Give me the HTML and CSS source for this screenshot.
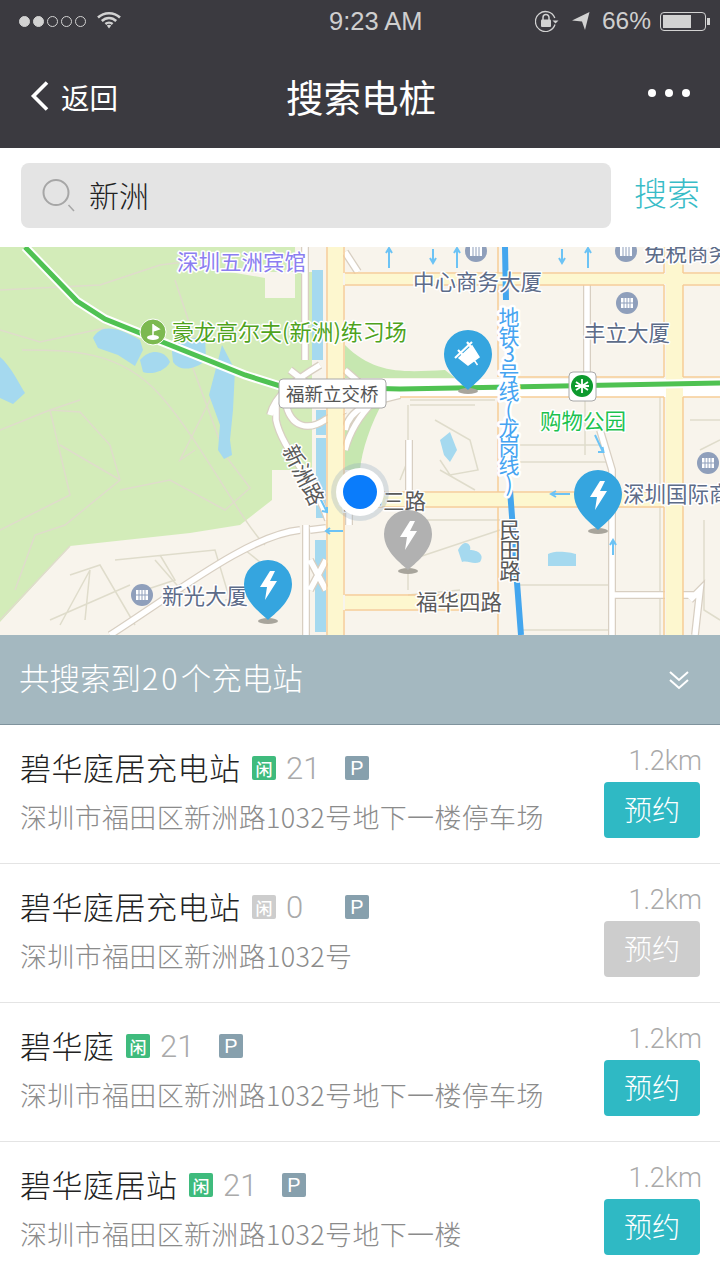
FILE: index.html
```html
<!DOCTYPE html>
<html lang="zh-CN">
<head>
<meta charset="utf-8">
<title>搜索电桩</title>
<link rel="stylesheet" href="styles.css">
</head>
<body>
<div class="screen">
  <header class="top">
    <div class="status">
      <div class="status-left">
        <span class="sig on"></span><span class="sig on"></span><span class="sig"></span><span class="sig"></span><span class="sig"></span>
        <svg class="wifi" width="24" height="18" viewBox="0 0 24 18"><path d="M1 6.500C7 .7 17 .7 23 6.500M4.800 10C9 6 15 6 19.200 10M8.400 13C10.400 11.300 13.600 11.300 15.600 13" fill="none" stroke="#d2d2d2" stroke-width="2.500"/><path d="M9.800 14.500L12 17.500 14.200 14.500C13 13.600 11 13.600 9.800 14.500Z" fill="#d2d2d2"/></svg>
      </div>
      <div class="time">9:23 AM</div>
      <div class="status-right">
        <svg class="lock" width="24" height="22" viewBox="0 0 24 22"><path d="M19.800 8A10 10 0 1 0 20 14.500" fill="none" stroke="#d2d2d2" stroke-width="1.300"/><path d="M17.500 10.500h6l-3 3z" fill="#d2d2d2"/><rect x="6" y="9.500" width="10" height="7.500" rx="1" fill="#d2d2d2"/><path d="M8 10V7.500a3 3 0 0 1 6 0V10" fill="none" stroke="#d2d2d2" stroke-width="1.500"/></svg>
        <svg class="arrow" width="18" height="20" viewBox="0 0 18 20"><path d="M0 9.500L17.500 1 13 19 10 10.500Z" fill="#d2d2d2"/></svg>
        <span class="pct">66%</span>
        <div class="battery"><div class="battery-fill"></div></div>
        <span class="battery-tip"></span>
      </div>
    </div>
    <nav class="nav">
      <div class="back">
        <svg width="20" height="32" viewBox="0 0 20 32"><path d="M17 2.500L3.500 16 17 29.500" fill="none" stroke="#fff" stroke-width="3.600"/></svg>
        <span>返回</span>
      </div>
      <h1 class="title">搜索电桩</h1>
      <div class="more"><i></i><i></i><i></i></div>
    </nav>
  </header>

  <div class="search">
    <div class="search-box">
      <svg width="36" height="36" viewBox="0 0 36 36"><circle cx="15" cy="14.500" r="12.500" fill="none" stroke="#a6a6a6" stroke-width="2"/><path d="M27.500 27L33 33" stroke="#a6a6a6" stroke-width="1.500"/></svg>
      <span class="query">新洲</span>
    </div>
    <span class="search-btn">搜索</span>
  </div>

  <div class="map">
    <svg width="720" height="388" viewBox="0 247 720 388">
      <defs>
        <g id="ramps">
          <path d="M305 247V360M270 415C275 395 295 380 320 365M290 370L322 395M276 402V420C282 450 315 480 328 520M285 400C290 430 310 430 325 420L345 410M300 530C250 535 180 590 110 635M310 530L326 528M306 525V635M310 560L326 590M326 560L310 590"/>
          <path d="M345 252L358 272M345 370L370 392H345M345 430C350 405 380 400 400 395M345 450C350 430 360 415 375 400M349 475V525"/>
          <path d="M587 285V378M600 430L612 470V635M612 595H665M683 595H700M690 600L700 590 695 635M409 440V490"/>
        </g>
      </defs>
      <rect x="0" y="247" width="720" height="388" fill="#f8f4ec"/>
      <path class="park" d="M0 247H312V470H272V500L240 525 190 533 70 546 0 622Z"/>
      <path class="hotel" d="M230 272L265 278V298H295V247H312V272Z"/>
      <path class="parkstrip" d="M345 345C375 375 405 372 445 370L455 378H345ZM345 425C360 410 375 400 385 398 370 425 362 450 360 470H345Z"/>
      <g class="minor">
        <path d="M0 290L100 285 160 265 240 255M0 330L40 342 105 328M22 350C70 350 120 350 160 395 200 440 240 520 265 545M50 410L0 430M80 400L50 410 70 495 0 530M50 410L80 412 110 445 120 480 65 525 35 535 15 590M120 480L60 445M120 490L170 480 225 510 250 488 225 455 190 360M175 280L195 340 190 360M60 625L90 570 85 620 M0 620L70 546M220 380L180 460 195 450 M160 555L175 580 145 590M70 575L100 565 135 625M50 620L130 585M155 560L190 600M115 560L215 550 230 600M245 550L270 570M225 600L280 590"/>
        <path d="M410 405H475M408 405V460L400 480M410 400L495 400M435 420L470 440 478 470 450 475 440 460M440 470L475 490M408 520H500M410 560L500 530M408 555V590M408 595L460 590M520 585H610M520 462H608L615 480M520 445H600M520 630H610M660 380V640M690 420H720M700 450L720 440M704 520V610L720 620M585 400V455"/>
      </g>
      <g class="lake">
        <path d="M93 338C100 325 115 325 140 340L143 350 135 366 118 355 98 348Z"/>
        <path d="M140 360C150 348 165 350 170 362 165 372 150 375 143 372Z"/>
        <path d="M172 352C175 340 190 340 205 335L206 360C195 370 180 372 173 362Z"/>
        <path d="M222 345L235 370 233 410 230 440 232 455 224 459 218 450 220 425 209 395Z"/>
        <path d="M0 357C10 365 20 385 25 393L13 404 0 398Z"/>
        <path d="M440 440L450 432 457 450 450 462 444 455Z"/>
        <path d="M458 550C465 537 472 545 470 550 478 550 485 555 480 562 473 565 468 560 462 562Z"/>
        <path d="M548 554C555 550 570 552 576 554V566H548Z"/>
      </g>
      <g class="canal">
        <rect x="312" y="270" width="11" height="90"/><rect x="316" y="410" width="10" height="25"/><rect x="316" y="438" width="10" height="80"/><rect x="315" y="540" width="11" height="92"/>
      </g>
      <use href="#ramps" class="road-case"/>
      <use href="#ramps" class="road-fill"/>
      <path class="metro-road" d="M345 388H720"/>
      <g class="yellow">
        <rect x="328" y="247" width="15" height="388"/>
        <rect x="345" y="274" width="375" height="10"/>
        <rect x="666" y="247" width="17" height="388"/>
        <rect x="345" y="493" width="320" height="13"/>
        <rect x="345" y="596" width="153" height="13"/>
      </g>
      <path class="road-edge" d="M327 247V635M344 247V273M344 285V492M344 507V595M344 610V635M345 273H664M683 273H720M345 285H664M683 285H720M664 285V377M683 285V377M664 397V492M683 397V635M664 507V635M345 492H664M345 507H664M345 595H498M345 610H498M498 247V273M498 285V377M498 397V492M498 507V595M498 610V635M500 377H664M683 377H720M400 397H664M683 397H720M664 247V273M683 247V273"/>
      <path class="line-case" d="M25 247L77 301 105 319 245 375 280 386 400 389 720 383"/>
      <path class="line-green" d="M25 247L77 301 105 319 245 375 280 386 400 389 720 383"/>
      <g class="oneway">
        <path d="M389 248V268M386 253l3-5 3 5M433 249V263M430 258l3 5 3-5M457 249V268M454 253l3-5 3 5M562 249V263M559 258l3 5 3-5M588 249V268M585 253l3-5 3 5"/>
        <path d="M595 435L603 452M598 452h5.500l-1-5M570 494H551M556 491l-5 3 5 3M613 540V555M610 545l3-5 3 5M320 498L327 512M322 511l5 1 0-5M343 531H326M330 528l-4 3 4 3"/>
      </g>
      <path class="metro-line" d="M505 247L506 300M510 490L521 635"/>

      <g class="poi">
        <circle cx="627" cy="303" r="11"/><rect x="621" y="298" width="12" height="10"/>
        <circle cx="708" cy="463" r="11"/><rect x="702" y="458" width="12" height="10"/>
        <circle cx="142" cy="595" r="11"/><rect x="136" y="590" width="12" height="10"/>
        <circle cx="626" cy="251" r="11"/><rect x="620" y="247" width="12" height="9"/>
        <circle cx="476" cy="251" r="11"/><rect x="470" y="247" width="12" height="9"/>
      </g>
      <path class="poi-lines" d="M624 298V308M627 298V308M630 298V308M621 303H633M705 458V468M708 458V468M711 458V468M702 463H714M139 590V600M142 590V600M145 590V600M136 595H148M623 247V256M626 247V256M629 247V256M473 247V256M476 247V256M479 247V256"/>
      <circle cx="153" cy="332" r="13" class="golf"/>
      <path d="M153 324V336M153 325L159 329 153 331" fill="#fff" stroke="#fff" stroke-width="1.500"/>
      <ellipse cx="153" cy="337.500" rx="6" ry="2.500" fill="#fff"/>

      <rect x="279" y="379" width="107" height="29" rx="4" class="tag"/>
      <text x="286" y="401" class="lbl tag-t">福新立交桥</text>
      <text x="177" y="270" class="lbl violet">深圳五洲宾馆</text>
      <text x="172" y="340" class="lbl green">豪龙高尔夫(新洲)练习场</text>
      <text x="413" y="290" class="lbl slate">中心商务大厦</text>
      <text x="644" y="261" class="lbl slate">免税商务</text>
      <text x="584" y="341" class="lbl slate">丰立大厦</text>
      <text x="623" y="502" class="lbl slate">深圳国际商</text>
      <text x="162" y="604" class="lbl slate">新光大厦</text>
      <text x="540" y="429" class="lbl bright">购物公园</text>
      <text x="416" y="610" class="lbl grey">福华四路</text>
      <text x="340" y="509" class="lbl grey">福中三路</text>
      <text x="0" y="0" class="lbl grey" transform="translate(282 450) rotate(63)">新洲路</text>
      <text x="509" y="307" class="lbl metro vert">地铁3号线(龙岗线)</text>
      <text x="510" y="519" class="lbl grey vert">民田路</text>

      <rect x="569" y="372" width="27" height="29" rx="4" class="tag"/>
      <circle cx="582" cy="386" r="11" fill="#0d9a2e"/>
      <path d="M582 379V393M576 382L588 390M588 382L576 390M575 386H589" stroke="#fff" stroke-width="1.800"/>

      <g class="pin-shadow"><ellipse cx="468" cy="391" rx="10" ry="3"/><ellipse cx="598" cy="531" rx="10" ry="3"/><ellipse cx="408" cy="571" rx="10" ry="3"/><ellipse cx="268" cy="621" rx="10" ry="3"/></g>
      <path class="pin" d="M468 390C462 384 444 372 444 354A24 24 0 0 1 492 354C492 372 474 384 468 390Z"/>
      <path d="M455 358L472 342M458 350L463 355M467 342L471 347" fill="none" stroke="#fff" stroke-width="2.200"/>
      <path d="M459 358L472 346 479 357 468 365ZM474 360L477.500 365" fill="#fff" stroke="#fff" stroke-width="1.500"/>
      <path class="pin" d="M598 530C592 524 574 512 574 494A24 24 0 0 1 622 494C622 512 604 524 598 530Z"/>
      <path class="bolt" d="M600 481L590 497H597L595 510 607 491H600L605 481Z"/>
      <path class="pin" d="M268 620C262 614 244 602 244 584A24 24 0 0 1 292 584C292 602 274 614 268 620Z"/>
      <path class="bolt" d="M270 571L260 587H267L265 600 277 581H270L275 571Z"/>
      <path class="pin-off" d="M408 570C402 564 384 552 384 534A24 24 0 0 1 432 534C432 552 414 564 408 570Z"/>
      <path class="bolt" d="M410 521L400 537H407L405 550 417 531H410L415 521Z"/>

      <circle cx="360" cy="492" r="29" fill="#8fa8c0" fill-opacity=".3"/>
      <circle cx="360" cy="492" r="24" fill="#fff"/>
      <circle cx="360" cy="492" r="17" fill="#0a7cfb"/>
    </svg>
  </div>

  <div class="banner">
    <span class="banner-text">共搜索到<span class="banner-num">20</span>个充电站</span>
    <svg width="22" height="20" viewBox="0 0 22 20"><path d="M2 2L11 10 20 2M2 10L11 18 20 10" fill="none" stroke="#fff" stroke-width="2"/></svg>
  </div>

  <ul class="list">
    <li class="row">
      <div class="info">
        <div class="line"><span class="name">碧华庭居充电站</span><span class="badge free">闲</span><span class="count">21</span><span class="badge park-b">P</span></div>
        <div class="addr">深圳市福田区新洲路1032号地下一楼停车场</div>
      </div>
      <div class="side"><span class="dist">1.2km</span><span class="book">预约</span></div>
    </li>
    <li class="row">
      <div class="info">
        <div class="line"><span class="name">碧华庭居充电站</span><span class="badge none">闲</span><span class="count">0</span><span class="badge park-b">P</span></div>
        <div class="addr">深圳市福田区新洲路1032号</div>
      </div>
      <div class="side"><span class="dist">1.2km</span><span class="book off">预约</span></div>
    </li>
    <li class="row">
      <div class="info">
        <div class="line"><span class="name">碧华庭</span><span class="badge free">闲</span><span class="count">21</span><span class="badge park-b">P</span></div>
        <div class="addr">深圳市福田区新洲路1032号地下一楼停车场</div>
      </div>
      <div class="side"><span class="dist">1.2km</span><span class="book">预约</span></div>
    </li>
    <li class="row">
      <div class="info">
        <div class="line"><span class="name">碧华庭居站</span><span class="badge free">闲</span><span class="count">21</span><span class="badge park-b">P</span></div>
        <div class="addr">深圳市福田区新洲路1032号地下一楼</div>
      </div>
      <div class="side"><span class="dist">1.2km</span><span class="book">预约</span></div>
    </li>
  </ul>
</div>
</body>
</html>
```

FILE: styles.css
```css
* { box-sizing: border-box; }
html, body { margin: 0; padding: 0; background: #fff; }
body { font-family: "Noto Sans CJK SC", "Liberation Sans", sans-serif; font-weight: 300; }
.screen { width: 720px; height: 1280px; overflow: hidden; display: flex; flex-direction: column; }

.top { height: 148px; background: #3b3a40; flex: none; }
.status { height: 42px; display: flex; align-items: center; color: #cfcfcf; font-family: "Liberation Sans", sans-serif; font-size: 25.500px; font-weight: 400; }
.status-left { width: 329px; padding-left: 19px; display: flex; align-items: center; gap: 3px; }
.sig { width: 11px; height: 11px; border-radius: 50%; border: 1px solid #d2d2d2; }
.sig.on { background: #d2d2d2; }
.wifi { margin-left: 8px; margin-top: -3px; }
.status-right { margin-left: auto; padding-right: 10px; display: flex; align-items: center; }
.arrow { margin-left: 13px; }
.pct { margin-left: 12px; font-size: 24.500px; }
.battery { width: 46px; height: 19px; margin-left: 9px; border: 1px solid #d2d2d2; border-radius: 4px; padding: 2px; }
.battery-fill { width: 28px; height: 100%; background: #d2d2d2; }
.battery-tip { width: 3px; height: 7px; background: #d2d2d2; margin-left: 1px; }

.nav { height: 106px; position: relative; display: flex; align-items: center; justify-content: center; color: #fff; }
.back { position: absolute; left: 30px; top: 2px; bottom: 0; display: flex; align-items: center; gap: 11px; font-size: 28.500px; font-weight: 400; }
.title { margin: 2px 0 0 2px; font-size: 37.500px; line-height: 1; font-weight: 400; }
.more { position: absolute; right: 30px; top: 47px; display: flex; gap: 9px; }
.more i { width: 8px; height: 8px; border-radius: 50%; background: #fff; }

.search { height: 99px; flex: none; padding: 15px 21px 19px; display: flex; align-items: center; background: #fff; }
.search-box { flex: none; width: 590px; height: 65px; background: #e4e4e4; border-radius: 8px; display: flex; align-items: center; padding-left: 20px; gap: 12px; }
.query { font-size: 30px; color: #222; padding-bottom: 4px; }
.search-btn { flex: none; white-space: nowrap; margin-left: 23px; color: #38bcc7; font-size: 33px; padding-bottom: 8px; }

.map { height: 388px; flex: none; overflow: hidden; }
.map svg { display: block; }
.park { fill: #d3ecb9; }
.hotel { fill: #f8f4ec; }
.parkstrip { fill: #c6e7b0; }
.minor { fill: none; stroke: #dfdccb; stroke-width: 1.500; }
.lake { fill: #a5d9ef; }
.canal rect { fill: #a5d9ef; }
.road-case { fill: none; stroke: #d8cfc2; stroke-width: 8; }
.road-fill { fill: none; stroke: #fff; stroke-width: 5.500; }
.metro-road { fill: none; stroke: #fff; stroke-width: 18; }
.road-edge { fill: none; stroke: #f6cd96; stroke-width: 1.500; }
.yellow rect { fill: #fdf7cf; }
.line-case { fill: none; stroke: #fff; stroke-width: 9; }
.line-green { fill: none; stroke: #4fc252; stroke-width: 5; }
.oneway { fill: none; stroke: #6cc3f5; stroke-width: 2; }
.metro-line { fill: none; stroke: #44a6ee; stroke-width: 6; }
.poi circle { fill: #8f9fbb; }
.poi rect { fill: #fff; }
.poi-lines { fill: none; stroke: #8f9fbb; stroke-width: 1; }
.golf { fill: #7cb950; stroke: #fff; stroke-width: 1; }
.tag { fill: #fff; stroke: #a8a8a8; stroke-width: 1; }
.lbl { font-family: "Noto Sans CJK SC", sans-serif; font-weight: 400; font-size: 21.500px; paint-order: stroke; stroke: #fff; stroke-width: 3px; stroke-linejoin: round; }
.tag-t { font-size: 18.500px; fill: #555; stroke: none; }
.violet { fill: #8b7ef0; }
.green { fill: #4fa31d; font-size: 22px; }
.slate { fill: #5d6c89; }
.bright { fill: #1cc24f; }
.grey { fill: #5a5a5a; }
.metro { fill: #46a4f1; }
.vert { writing-mode: vertical-rl; text-orientation: upright; letter-spacing: -1px; }
.metro { font-size: 21px; letter-spacing: -2.500px; stroke-width: 5px; }
.pin { fill: #35a5df; }
.pin-off { fill: #b1b1b1; }
.pin-shadow ellipse { fill: #a8a59c; }
.bolt { fill: #fff; }

.banner { height: 90px; flex: none; background: #a4b8c0; border-bottom: 1px solid #7f939d; display: flex; align-items: center; justify-content: space-between; padding: 0 30px 0 19px; color: #fff; font-size: 30.500px; }
.banner-text { padding-bottom: 5px; }
.banner-num { letter-spacing: 3px; margin-left: 1px; }
.list { list-style: none; margin: 0; padding: 0; }
.row { height: 139px; border-bottom: 1px solid #e4e4e4; padding: 0 20px; display: flex; justify-content: space-between; }
.info { padding-top: 20px; }
.line { display: flex; align-items: center; height: 46px; }
.name { font-size: 31px; letter-spacing: .5px; color: #222; padding-bottom: 3px; }
.badge { width: 24px; height: 24px; border-radius: 2px; color: #fff; display: flex; align-items: center; justify-content: center; font-size: 17px; font-weight: 500; }
.free { background: #3fbb7d; margin-left: 11.500px; }
.none { background: #cdcdcd; margin-left: 11.500px; }
.park-b { background: #87a0ad; font-family: "Liberation Sans", sans-serif; font-size: 20px; font-weight: 400; }
.count { width: 69px; padding-left: 10px; color: #aaa; font-size: 31px; font-family: "Roboto", sans-serif; font-weight: 300; }
.addr { margin-top: 6px; font-size: 27px; line-height: 40px; color: #8b8b8b; letter-spacing: .33px; }
.side { padding-top: 19px; display: flex; flex-direction: column; align-items: flex-end; }
.dist { font-size: 27px; line-height: 34px; color: #aaa; font-family: "Roboto", sans-serif; font-weight: 300; margin-right: -2px; }
.book { width: 96px; height: 56px; margin-top: 4px; border-radius: 4px; background: #2fb9c4; color: #fff; font-size: 28px; padding-bottom: 2px; display: flex; align-items: center; justify-content: center; }
.book.off { background: #cdcdcd; }
```
